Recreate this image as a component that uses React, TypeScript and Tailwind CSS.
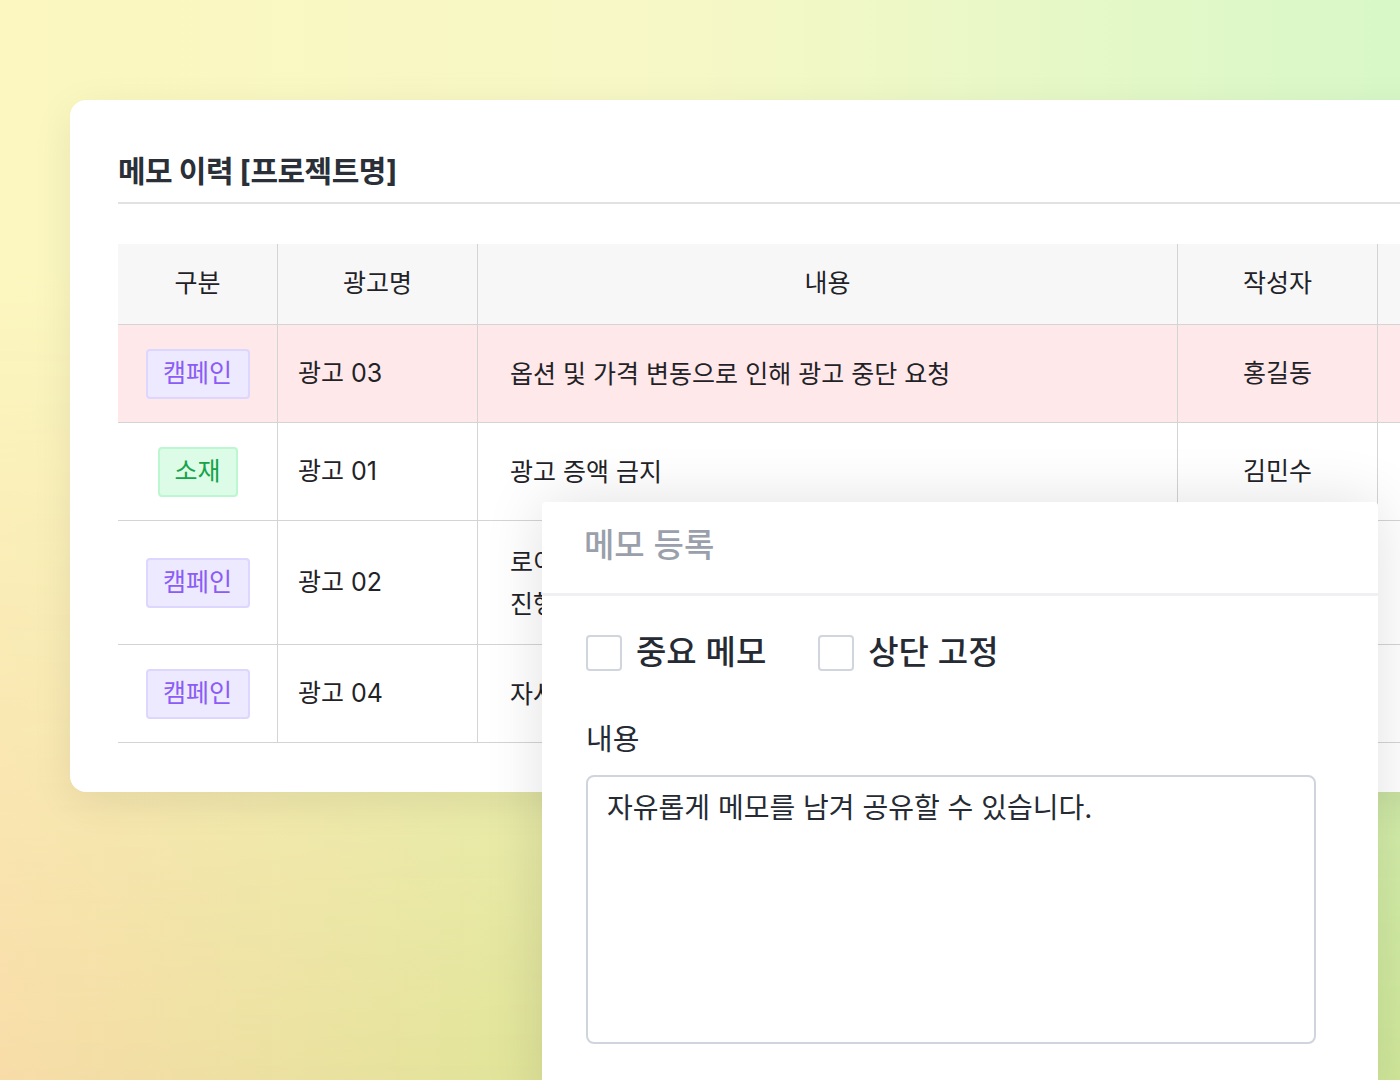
import React from "react";

const F = { fontFamily: "Inter, 'Noto Sans CJK KR', sans-serif" };

function Badge({ kind }: { kind: "c" | "s" }) {
  return kind === "c" ? (
    <span className="inline-flex items-center justify-center w-[104px] h-[50px] rounded-[4px] border-2 border-[#ddd6fe] bg-[#ede9fe] text-[#8b5cf6] text-[25px]">캠페인</span>
  ) : (
    <span className="inline-flex items-center justify-center w-[80px] h-[50px] rounded-[4px] border-2 border-[#bbf7d0] bg-[#dcfce7] text-[#16a34a] text-[25px]">소재</span>
  );
}

const rows = [
  { k: "c" as const, name: "광고 03", content: ["옵션 및 가격 변동으로 인해 광고 중단 요청"], who: "홍길동", h: "h-[98px]", bg: "bg-[#ffe8ea]" },
  { k: "s" as const, name: "광고 01", content: ["광고 증액 금지"], who: "김민수", h: "h-[98px]", bg: "bg-white" },
  { k: "c" as const, name: "광고 02", content: ["로이", "진행"], who: "", h: "h-[124px]", bg: "bg-white" },
  { k: "c" as const, name: "광고 04", content: ["자사"], who: "", h: "h-[98px]", bg: "bg-white" },
];

export default function App() {
  return (
    <div style={F} className="relative w-[1400px] h-[1080px] overflow-hidden text-[#1f2328]">
      <div className="absolute inset-0 bg-[linear-gradient(90deg,#fcf7c0_0%,#f6f8c6_50%,#d8f8c8_100%)]" />
      <div className="absolute inset-0 bg-[linear-gradient(90deg,#f8dca8_0%,#dce696_45%,#d0e89a_100%)] [mask-image:linear-gradient(180deg,transparent_25%,black_100%)]" />
      <div className="relative ml-[70px] mt-[100px] w-[1400px] h-[692px] bg-white rounded-[16px] shadow-[0_10px_40px_rgba(0,0,0,0.08)] pl-[48px] pt-[48px]">
        <div className="text-[30px] font-bold text-[#2a2f38] leading-[46px] tracking-[-0.5px]">메모 이력 [프로젝트명]</div>
        <div className="mt-[8px] h-[2px] bg-[#e2e2e4]" />
        <div className="mt-[40px] text-[25px]">
          <div className="flex h-[81px] bg-[#f7f7f7] border-b border-[#d4d4d4]">
            <div className="w-[160px] flex items-center justify-center border-r border-[#d4d4d4]">구분</div>
            <div className="w-[200px] flex items-center justify-center border-r border-[#d4d4d4]">광고명</div>
            <div className="w-[700px] flex items-center justify-center border-r border-[#d4d4d4]">내용</div>
            <div className="w-[200px] flex items-center justify-center border-r border-[#d4d4d4]">작성자</div>
            <div className="flex-1" />
          </div>
          {rows.map((r, i) => (
            <div key={i} className={`flex ${r.h} ${r.bg} border-b border-[#d4d4d4]`}>
              <div className="w-[160px] flex items-center justify-center border-r border-[#d4d4d4]"><Badge kind={r.k} /></div>
              <div className="w-[200px] flex items-center pl-[20px] border-r border-[#d4d4d4]">{r.name}</div>
              <div className="w-[700px] flex flex-col justify-center pl-[32px] border-r border-[#d4d4d4] leading-[42px]">
                {r.content.map((c, j) => <div key={j}>{c}</div>)}
              </div>
              <div className="w-[200px] flex items-center justify-center border-r border-[#d4d4d4]">{r.who}</div>
              <div className="flex-1" />
            </div>
          ))}
        </div>
      </div>
      <div className="absolute left-[542px] top-[502px] w-[836px] h-[600px] bg-white rounded-t-[4px] shadow-[0_0_60px_rgba(0,0,0,0.12)]">
        <div className="h-[94px] flex items-center pl-[42px] pb-[4px] text-[33px] text-[#9aa0ab] font-medium border-b-[3px] border-[#f0f0f2]">메모 등록</div>
        <div className="pl-[44px] pt-[32px] flex items-center gap-[52px] text-[33px] font-medium text-[#252a33]">
          <label className="flex items-center gap-[14px]"><span className="w-[36px] h-[36px] rounded-[4px] border-2 border-[#d0d5de]" />중요 메모</label>
          <label className="flex items-center gap-[14px]"><span className="w-[36px] h-[36px] rounded-[4px] border-2 border-[#d0d5de]" />상단 고정</label>
        </div>
        <div className="pl-[44px] mt-[40px] text-[29px] text-[#252a33]">내용</div>
        <div className="ml-[44px] mt-[14px] w-[730px] h-[269px] rounded-[8px] border-2 border-[#d0d4dc] px-[19px] py-[10px] text-[28px] text-[#252a33]">
          자유롭게 메모를 남겨 공유할 수 있습니다.
        </div>
      </div>
    </div>
  );
}
